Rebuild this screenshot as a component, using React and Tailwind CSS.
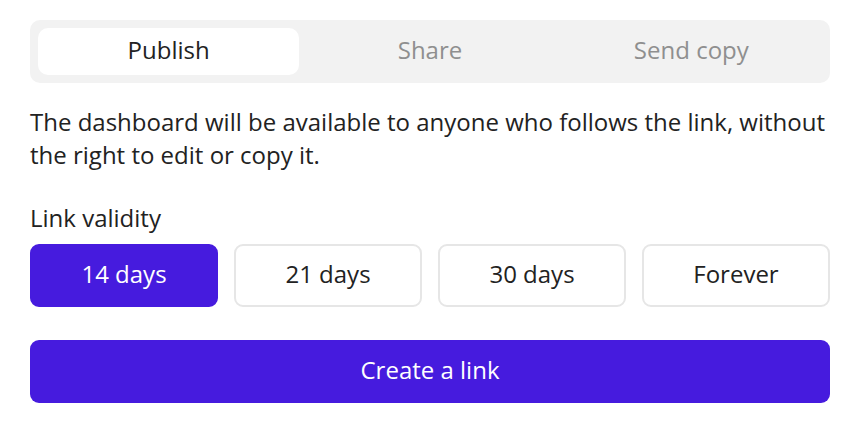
import React, { useState } from "react";

const tabs = ["Publish", "Share", "Send copy"];
const periods = ["14 days", "21 days", "30 days", "Forever"];

export default function App() {
  const [tab, setTab] = useState(0);
  const [period, setPeriod] = useState(0);

  return (
    <div
      className="w-[862px] h-[426px] bg-white pl-[30px] pr-[32px] pt-[20px] text-[#222]"
      style={{ fontFamily: '"Open Sans", sans-serif' }}
    >
      {/* Tabs */}
      <div className="grid grid-cols-3 p-[8px] bg-[#f2f2f2] rounded-[10px] h-[63px]">
        {tabs.map((t, i) => (
          <button
            key={t}
            onClick={() => setTab(i)}
            className={
              i === tab
                ? "bg-white rounded-[10px] text-[24px] leading-[33px] text-[#222] pb-[4px]"
                : "rounded-[10px] text-[24px] leading-[33px] text-[#8f8f8f] pb-[4px]"
            }
          >
            {t}
          </button>
        ))}
      </div>

      {/* Description */}
      <p className="mt-[22px] text-[24px] leading-[33px]">
        The dashboard will be available to anyone who follows the link, without the right to edit or copy it.
      </p>

      <div className="mt-[30px] text-[24px] leading-[33px]">Link validity</div>

      {/* Period options */}
      <div className="mt-[10px] grid grid-cols-4 gap-[16px]">
        {periods.map((p, i) => (
          <button
            key={p}
            onClick={() => setPeriod(i)}
            className={
              i === period
                ? "h-[63px] rounded-[9px] bg-[#461bde] text-white text-[24px] leading-[33px] pb-[4px] border-2 border-[#461bde]"
                : "h-[63px] rounded-[9px] bg-white text-[#222] text-[24px] leading-[33px] pb-[4px] border-2 border-[#e6e6e6]"
            }
          >
            {p}
          </button>
        ))}
      </div>

      <button className="mt-[33px] w-full h-[63px] rounded-[9px] bg-[#461bde] text-white text-[24px] leading-[33px] pb-[4px]">
        Create a link
      </button>
    </div>
  );
}
